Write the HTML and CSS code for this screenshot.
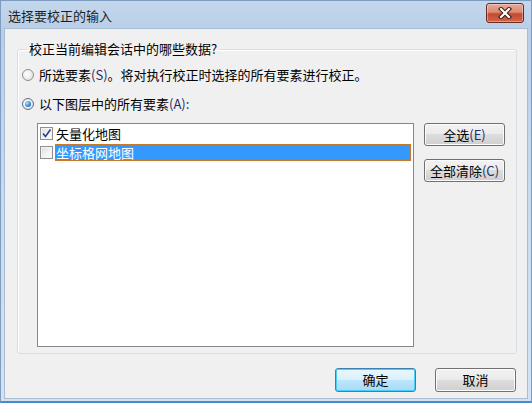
FILE: index.html
```html
<!DOCTYPE html>
<html lang="zh-CN">
<head>
<meta charset="utf-8">
<title>选择要校正的输入</title>
<link rel="stylesheet" href="styles.css">
</head>
<body>
<div class="window">
  <div class="titlebar">
    <span class="title">选择要校正的输入</span>
    <button class="close" aria-label="关闭">
      <svg width="18" height="12" viewBox="0 0 18 12">
        <path d="M5 2 L13 10 M13 2 L5 10" stroke="#3a1a14" stroke-width="4.2" stroke-linecap="square" fill="none"/>
        <path d="M5 2 L13 10 M13 2 L5 10" stroke="#ffffff" stroke-width="2.2" stroke-linecap="square" fill="none"/>
      </svg>
    </button>
  </div>
  <div class="client">
    <fieldset class="group">
      <legend class="legend">校正当前编辑会话中的哪些数据?</legend>
      <label class="radio-row">
        <span class="radio"></span>
        <span>所选要素<span class="acc">(S)</span>。将对执行校正时选择的所有要素进行校正。</span>
      </label>
      <label class="radio-row second">
        <span class="radio checked"><span class="dot"></span></span>
        <span>以下图层中的所有要素<span class="acc">(A):</span></span>
      </label>
      <div class="layers">
        <div class="list">
          <div class="item">
            <span class="check">
              <svg width="11" height="11" viewBox="0 0 11 11"><path d="M2 5.5 L4.5 8.5 L9.5 1.5" stroke="#2a3f8f" stroke-width="1.6" fill="none"/></svg>
            </span>
            <span class="item-text">矢量化地图</span>
          </div>
          <div class="item">
            <span class="check"></span>
            <span class="item-text selected">坐标格网地图</span>
          </div>
        </div>
        <div class="side-buttons">
          <button class="btn">全选<span class="acc">(E)</span></button>
          <button class="btn">全部清除<span class="acc">(C)</span></button>
        </div>
      </div>
    </fieldset>
    <div class="footer">
      <button class="btn default">确定</button>
      <button class="btn">取消</button>
    </div>
  </div>
</div>
</body>
</html>
```
FILE: styles.css
```css
* { box-sizing: border-box; }
html, body { margin: 0; padding: 0; }
body {
  width: 532px;
  height: 403px;
  overflow: hidden;
  font-family: "Noto Sans CJK SC", "Noto Sans", sans-serif;
  font-size: 13px;
  color: #000;
  background: #fff;
}
.window {
  width: 532px;
  height: 403px;
  display: flex;
  flex-direction: column;
  background: linear-gradient(to bottom, #c3d7ec 0px, #b9cfe7 30px, #c8dbef 200px, #d3e3f3 403px);
  border: 1px solid #7d9cbf;
  border-bottom: 2px solid #4d8bc7;
  padding: 0 3px 2px 3px;
}
.titlebar {
  height: 27px;
  display: flex;
  align-items: center;
  justify-content: space-between;
  padding: 0 4px 0 4px;
  flex-shrink: 0;
}
.title {
  font-size: 13px;
  color: #1e1e1e;
  line-height: 1;
  margin-top: 1px;
}
.close {
  width: 38px;
  height: 20px;
  margin-top: -3px;
  border: 1px solid #6b2c20;
  border-radius: 3px;
  background: linear-gradient(to bottom, #e9a997 0%, #dc8a73 45%, #c54a30 55%, #d0654a 100%);
  box-shadow: inset 0 0 0 1px rgba(255,255,255,0.35);
  display: flex;
  align-items: center;
  justify-content: center;
  padding: 0;
}
.client {
  flex: 1;
  background: #f0f0f0;
  border: 1px solid #a9bdd2;
  display: flex;
  flex-direction: column;
  padding: 0 10px 0 12px;
}
.group {
  margin: 13px 0 0 0;
  padding: 0 0 6px 4px;
  border: 1px solid #d5dfe5;
  border-radius: 3px;
  height: 312px;
  display: flex;
  flex-direction: column;
  box-shadow: 1px 1px 0 #fff inset;
}
.legend {
  padding: 0 2px 0 2px;
  margin-left: 5px;
  line-height: 14px;
  font-size: 13px;
}
.acc { color: #1f2c66; }
.radio-row {
  display: flex;
  align-items: center;
  gap: 5px;
  height: 16px;
  margin-top: 11px;
  line-height: 16px;
}
.radio-row.second { margin-top: 13px; }
.radio {
  width: 12px;
  height: 12px;
  border-radius: 50%;
  border: 1px solid #8e8f8f;
  background: radial-gradient(circle at 40% 40%, #ffffff 0%, #eeeeee 50%, #d4d4d4 100%);
  display: flex;
  align-items: center;
  justify-content: center;
  flex-shrink: 0;
}
.radio.checked { border-color: #5b6f87; }
.dot {
  width: 6px;
  height: 6px;
  border-radius: 50%;
  background: radial-gradient(circle at 35% 35%, #b9e4ff 0%, #2f8fd8 55%, #124f8f 100%);
}
.layers {
  display: flex;
  gap: 10px;
  margin-top: 11px;
  margin-left: 15px;
  flex: 1;
}
.list {
  width: 377px;
  height: 224px;
  background: #fff;
  border: 1px solid #828790;
  padding: 0 2px 0 2px;
  display: flex;
  flex-direction: column;
  gap: 1px;
}
.item {
  display: flex;
  align-items: center;
  height: 18px;
  gap: 2px;
}
.check {
  width: 13px;
  height: 13px;
  border: 1px solid #8f8f8f;
  background: linear-gradient(135deg, #dcdcdc 0%, #f4f4f4 60%, #ffffff 100%);
  box-shadow: inset 0 0 0 1px #f4f4f4;
  display: flex;
  align-items: center;
  justify-content: center;
  flex-shrink: 0;
}
.item-text {
  font-size: 13px;
  line-height: 17px;
  height: 17px;
  padding: 0 1px;
}
.item-text.selected {
  flex: 1;
  background: #3399ff;
  color: #fff;
  outline: 1px dotted #c97a2a;
  outline-offset: -1px;
}
.side-buttons {
  display: flex;
  flex-direction: column;
  gap: 13px;
  padding-top: 0;
}
.btn {
  font-family: "Noto Sans CJK SC", "Noto Sans", sans-serif;
  font-size: 13px;
  color: #000;
  width: 81px;
  height: 23px;
  padding: 0;
  border: 1px solid #707070;
  border-radius: 3px;
  background: linear-gradient(to bottom, #f2f2f2 0%, #ebebeb 49%, #dddddd 50%, #cfcfcf 100%);
  box-shadow: inset 0 0 0 1px #fcfcfc;
  line-height: 20px;
}
.footer {
  display: flex;
  justify-content: flex-end;
  gap: 19px;
  margin-top: 14px;
  padding-right: 1px;
}
.footer .btn { width: 81px; height: 24px; }
.btn.default {
  border-color: #3c7fb1;
  background: linear-gradient(to bottom, #eaf6fd 0%, #d9f0fc 49%, #bee6fd 50%, #a7d9f5 100%);
  box-shadow: inset 0 0 0 1px #48d0f8;
}
```
